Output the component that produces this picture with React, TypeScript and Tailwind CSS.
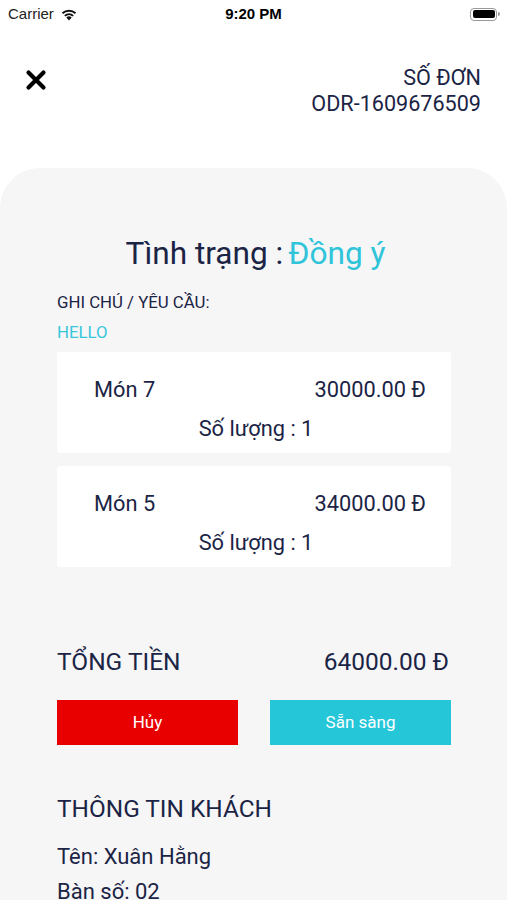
const navy = 'text-[#1b2445]';

const Item = ({ name, price }: { name: string; price: string }) => (
  <div className="bg-white rounded-[3px] h-[101px] pl-[37px] pr-[25px] pt-[24px]">
    <div className={`flex justify-between text-[21.8px] leading-[28px] ${navy}`}>
      <span>{name}</span>
      <span>{price}</span>
    </div>
    <div className={`text-center text-[21.8px] leading-[28px] mt-[11px] pr-[8px] ${navy}`}>Số lượng : 1</div>
  </div>
);

export default function App() {
  return (
    <div className="w-[507px] h-[900px] overflow-hidden bg-white" style={{ fontFamily: 'Roboto, "Noto Sans", sans-serif' }}>
      {/* status bar */}
      <div className="h-[28px] flex items-center justify-between px-[8px] text-[15px] text-black relative">
        <div className="flex items-center gap-[6px]">
          <span className="text-[#222]" style={{ fontFamily: '"Liberation Sans", sans-serif' }}>Carrier</span>
          <svg width="18" height="13" viewBox="0 0 18 13">
            <path d="M9 12.5 L6.3 9.4 A4 4 0 0 1 11.7 9.4 Z" fill="#111" />
            <path d="M4.2 7.2 A7 7 0 0 1 13.8 7.2 L12.5 8.6 A5.2 5.2 0 0 0 5.5 8.6 Z" fill="#111" />
            <path d="M1.8 4.6 A10.5 10.5 0 0 1 16.2 4.6 L14.9 6 A8.6 8.6 0 0 0 3.1 6 Z" fill="#111" />
          </svg>
        </div>
        <span className="absolute left-1/2 -translate-x-1/2 font-semibold text-[15px]" style={{ fontFamily: '"Liberation Sans", sans-serif' }}>9:20 PM</span>
        <div className="flex items-center mr-[-1px]">
          <div className="w-[27px] h-[13px] rounded-[4px] border border-[#999] p-[1.5px]">
            <div className="w-full h-full bg-black rounded-[2px]" />
          </div>
          <div className="w-[2px] h-[4px] bg-[#999] rounded-r-sm ml-[1px]" />
        </div>
      </div>

      {/* header */}
      <div className="flex justify-between px-[25px] pr-[26px] pt-[37px] h-[140px]">
        <svg width="22" height="22" viewBox="0 0 22 22" className="mt-[4px]">
          <path d="M3.5 3.5 L18.5 18.5 M18.5 3.5 L3.5 18.5" stroke="#000" strokeWidth="4.2" strokeLinecap="round" />
        </svg>
        <div className={`text-right text-[21.6px] leading-[26px] ${navy}`}>
          <div>SỐ ĐƠN</div>
          <div>ODR-1609676509</div>
        </div>
      </div>

      {/* card */}
      <div className="bg-[#f6f6f7] rounded-t-[40px] h-[732px] pl-[57px] pr-[56px] pt-[65px]">
        <div className="text-center text-[31.6px] leading-[42px] pl-[3px]">
          <span className={navy}>Tình trạng :</span>
          <span className="text-[#2fc4d9] ml-[5px]">Đồng ý</span>
        </div>
        <div className={`text-[16.8px] leading-[20px] mt-[17px] ${navy}`}>GHI CHÚ / YÊU CẦU:</div>
        <div className="text-[16.8px] leading-[20px] mt-[10px] text-[#38c6db]">HELLO</div>
        <div className="flex flex-col gap-[13px] mt-[10px]">
          <Item name="Món 7" price="30000.00 Đ" />
          <Item name="Món 5" price="34000.00 Đ" />
        </div>
        <div className={`flex justify-between items-center mt-[80px] text-[24.5px] leading-[30px] ${navy}`}>
          <span>TỔNG TIỀN</span>
          <span className="mr-[2px]">64000.00 Đ</span>
        </div>
        <div className="flex justify-between mt-[23px]">
          <button className="w-[181px] h-[45px] bg-[#e80000] text-white text-[17px]">Hủy</button>
          <button className="w-[181px] h-[45px] bg-[#26c6d9] text-white text-[17px]">Sẵn sàng</button>
        </div>
        <div className={`mt-[49px] text-[24.4px] leading-[30px] ${navy}`}>THÔNG TIN KHÁCH</div>
        <div className={`mt-[19px] text-[22px] leading-[28px] ${navy}`}>Tên: Xuân Hằng</div>
        <div className={`mt-[7px] text-[22px] leading-[28px] ${navy}`}>Bàn số: 02</div>
      </div>
    </div>
  );
}
